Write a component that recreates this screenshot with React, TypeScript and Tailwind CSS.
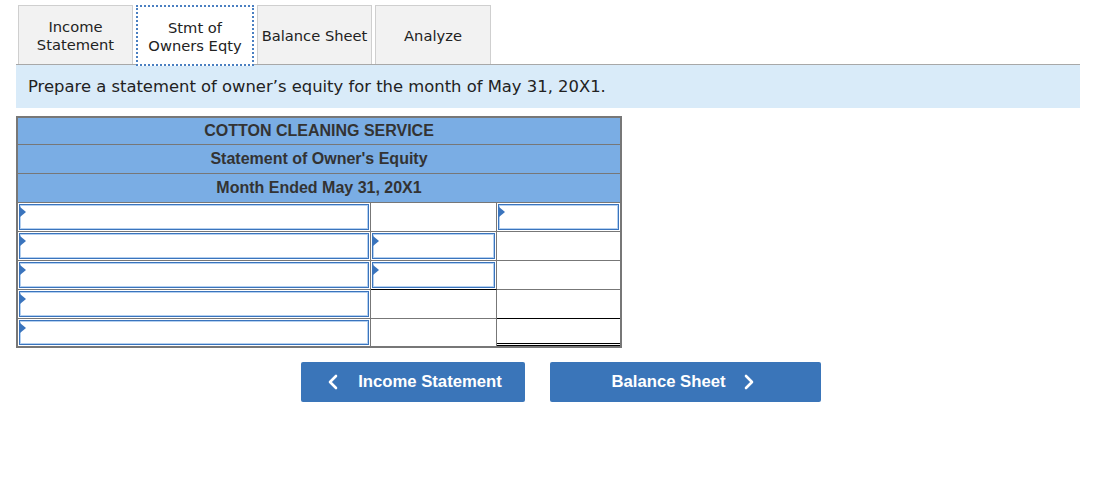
import React from 'react';

type Cell = {
  input?: boolean;
  line?: 'single' | 'double';
};

// rows of the statement grid: [description, amount, total]
const rows: Cell[][] = [
  [{ input: true }, {}, { input: true }],
  [{ input: true }, { input: true }, {}],
  [{ input: true }, { input: true, line: 'single' }, {}],
  [{ input: true }, {}, { line: 'single' }],
  [{ input: true }, {}, { line: 'double' }],
];

const tabs = [
  { label: ['Income', 'Statement'], w: 'w-[115px]' },
  { label: ['Stmt of', 'Owners Eqty'], w: 'w-[118px]', active: true },
  { label: ['Balance Sheet'], w: 'w-[115px]' },
  { label: ['Analyze'], w: 'w-[116px]' },
];

const headers = ['COTTON CLEANING SERVICE', "Statement of Owner's Equity", 'Month Ended May 31, 20X1'];

function InputBox() {
  return (
    <div className="relative h-full w-full border border-[#3a74bd] shadow-[inset_0_0_0_1px_#b4d0f0] bg-white">
      <span className="absolute left-0 top-[2px] h-0 w-0 border-y-[5px] border-l-[6px] border-y-transparent border-l-[#3a74bd]" />
    </div>
  );
}

function Chevron({ dir }: { dir: 'left' | 'right' }) {
  return (
    <svg width="10" height="16" viewBox="0 0 10 16" fill="none">
      <polyline
        points={dir === 'left' ? '8,2 2,8 8,14' : '2,2 8,8 2,14'}
        stroke="white"
        strokeWidth="2.6"
        strokeLinecap="round"
        strokeLinejoin="round"
      />
    </svg>
  );
}

export default function App() {
  return (
    <div className="w-[1107px] h-[495px] bg-white pl-4 pt-[5px] font-['DejaVu_Sans',Verdana,sans-serif] text-[#222]">
      {/* Tabs */}
      <div className="flex gap-[3px] pl-[2px]">
        {tabs.map((t, i) => (
          <div
            key={i}
            className={`${t.w} h-[59px] flex flex-col items-center justify-center pt-[2px] text-[14.7px] leading-[18px] text-center ${
              t.active
                ? 'bg-white border-2 border-dotted border-[#4a7fc1] relative z-10 h-[61px] -mb-[2px]'
                : 'bg-[#f2f2f2] border border-b-0 border-[#cfcfcf]'
            }`}
          >
            {t.label.map((l) => (
              <span key={l}>{l}</span>
            ))}
          </div>
        ))}
      </div>

      {/* Instruction band */}
      <div className="w-[1064px] h-[44px] border-t border-[#a8a8a8] bg-[#d9ebf9] flex items-center pl-3 pt-[2px] text-[16.4px] text-[#222]">
        Prepare a statement of owner’s equity for the month of May 31, 20X1.
      </div>

      {/* Statement table */}
      <div className="mt-2 w-[606px] border-2 border-[#777] font-['Liberation_Sans',Arial,sans-serif] font-bold text-[16px] text-[#333]">
        {headers.map((h, hi) => (
          <div
            key={h}
            className={`${hi === 0 ? 'h-[27px]' : 'h-[29px]'} bg-[#7aade4] border-b border-[#777] flex items-center justify-center`}
          >
            {h}
          </div>
        ))}
        <div className="grid grid-cols-[353px_126px_123px]">
          {rows.map((r, ri) =>
            r.map((c, ci) => {
              const last = ri === rows.length - 1;
              const bottom =
                c.line === 'double'
                  ? 'border-b-[3px] border-double border-b-black'
                  : c.line === 'single'
                  ? 'border-b border-b-black'
                  : last
                  ? ''
                  : 'border-b border-b-[#777]';
              return (
                <div
                  key={`${ri}-${ci}`}
                  className={`${last ? 'h-[27px]' : 'h-[29px]'} p-px ${ci < 2 ? 'border-r border-r-[#777]' : ''} ${bottom}`}
                >
                  {c.input && <InputBox />}
                </div>
              );
            })
          )}
        </div>
      </div>

      {/* Navigation buttons */}
      <div className="flex gap-[25px] mt-[14px] ml-[285px] font-['Liberation_Sans',Arial,sans-serif] font-bold text-[16.7px] text-white">
        <button className="w-[224px] h-[40px] rounded-[2px] bg-[#3a75b9] flex items-center justify-center gap-5 pl-[4px]">
          <Chevron dir="left" />
          <span>Income Statement</span>
        </button>
        <button className="w-[271px] h-[40px] rounded-[2px] bg-[#3a75b9] flex items-center justify-center gap-[18px] pr-[6px]">
          <span>Balance Sheet</span>
          <Chevron dir="right" />
        </button>
      </div>
    </div>
  );
}
